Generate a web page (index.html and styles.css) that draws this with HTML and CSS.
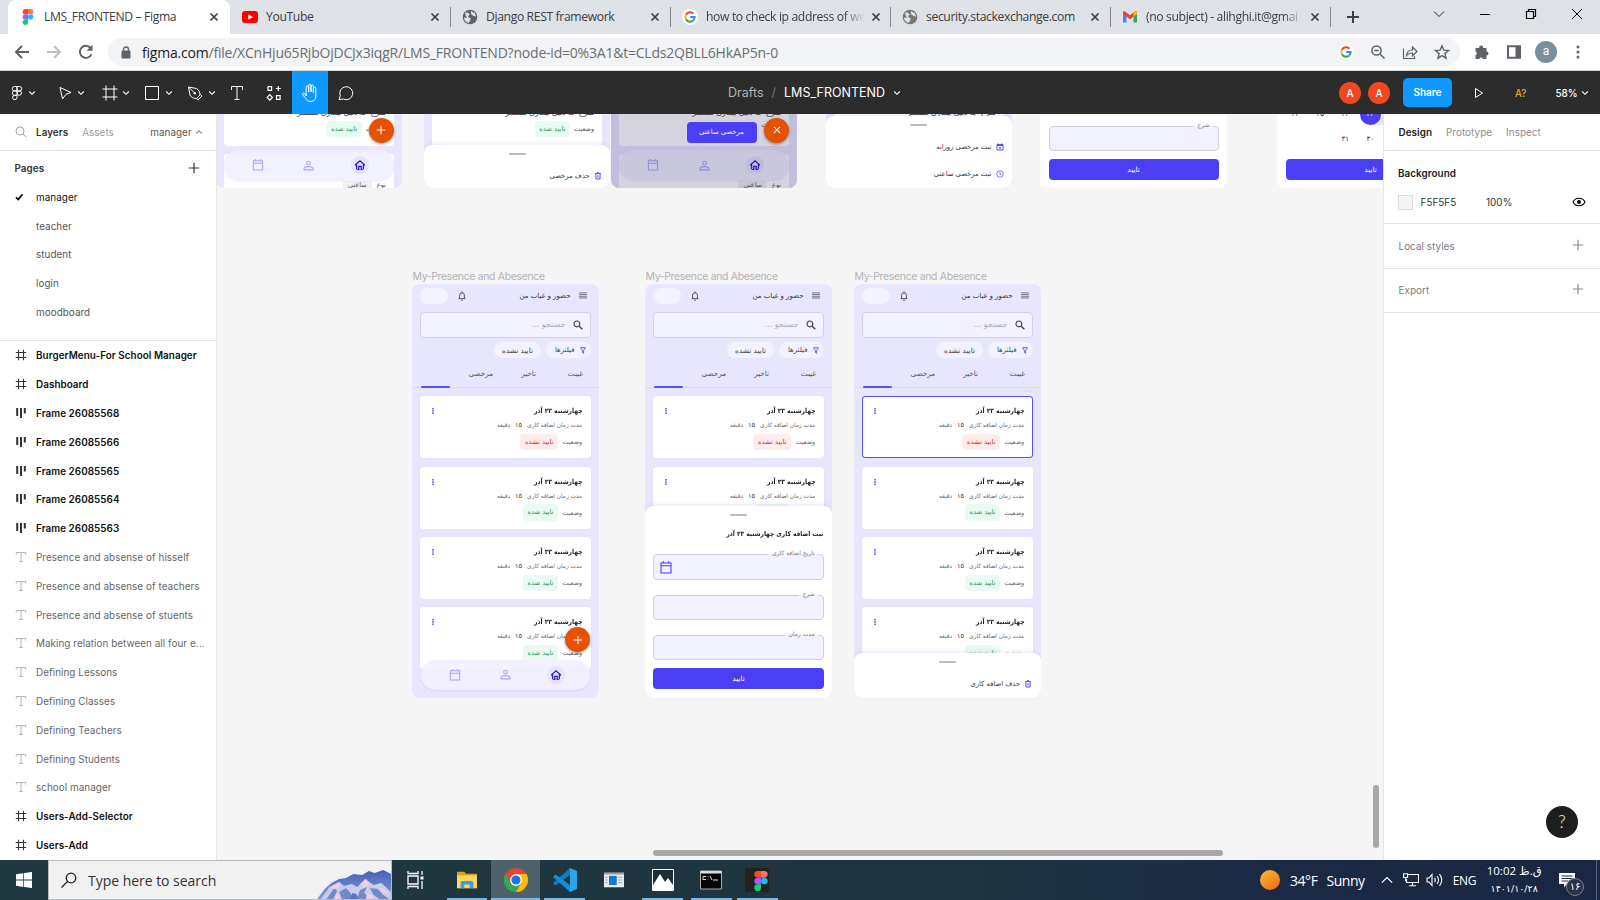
FILE: index.html
```html
<!DOCTYPE html>
<html lang="en">
<head>
<meta charset="utf-8">
<title>LMS_FRONTEND – Figma</title>
<link rel="stylesheet" href="styles.css">
</head>
<body>
<svg class="defs" aria-hidden="true">
  <symbol id="x" viewBox="0 0 10 10"><path d="M1.5 1.5l7 7m0-7l-7 7" fill="none" stroke="currentColor" stroke-width="1.7"/></symbol>
  <symbol id="chev" viewBox="0 0 8 6"><path d="M1.2 1.5L4 4.3l2.800-2.800" fill="none" stroke="currentColor" stroke-width="1.1"/></symbol>
  <symbol id="plus" viewBox="0 0 12 12"><path d="M6 .8v10.400M.8 6h10.400" fill="none" stroke="currentColor" stroke-width="1.200"/></symbol>
  <symbol id="globe" viewBox="0 0 16 16"><circle cx="8" cy="8" r="7.300" fill="currentColor"/><path d="M3 3.500c2-.2 4 .3 4.500 1.700.2 1-1.500 1.300-1.500 2.300S8 8.500 8.500 9.500 7.500 12 7 13.800C4 13.500 2 11 2 8.500L5 9 3.500 6zM9 2l4 2.200 1 3.300-2.500-.5-2-1.500L9 4.500z" fill="#dee1e6"/></symbol>
  <symbol id="goog" viewBox="0 0 18 18"><circle cx="9" cy="9" r="9" fill="#fff"/><g fill="none" stroke-width="2.300"><path d="M12.900 5.200A5.200 5.200 0 0 0 4.400 6.600" stroke="#ea4335"/><path d="M4.400 6.600a5.200 5.200 0 0 0 0 4.800" stroke="#fbbc05"/><path d="M4.400 11.400a5.200 5.200 0 0 0 8.200 1.500" stroke="#34a853"/><path d="M12.600 12.900A5 5 0 0 0 14.200 9H9.200" stroke="#4285f4"/></g></symbol>
  <symbol id="figlogo" viewBox="0 0 12 18"><path d="M3 0h3v6H3a3 3 0 0 1 0-6z" fill="#f24e1e"/><path d="M6 0h3a3 3 0 0 1 0 6H6z" fill="#ff7262"/><path d="M3 6h3v6H3a3 3 0 0 1 0-6z" fill="#a259ff"/><circle cx="9" cy="9" r="3" fill="#1abcfe"/><path d="M3 12h3v3a3 3 0 1 1-3-3z" fill="#0acf83"/></symbol>
  <symbol id="frame" viewBox="0 0 12 12"><path d="M3.500.8v10.400M8.500.8v10.400M.8 3.500h10.400M.8 8.500h10.400" fill="none" stroke="currentColor" stroke-width="1.100"/></symbol>
  <symbol id="auto" viewBox="0 0 12 12"><path d="M2.200 1v8M6 1v10M9.800 1v5.500" fill="none" stroke="currentColor" stroke-width="2"/></symbol>
  <symbol id="txt" viewBox="0 0 12 12"><path d="M1.300 3.500V1.500h9.400v2M6 1.500v9M4.200 10.500h3.600" fill="none" stroke="currentColor" stroke-width=".9"/></symbol>
  <symbol id="burger" viewBox="0 0 8 7"><path d="M0 .9h8M0 2.600h8M0 4.300h8M0 6h8" stroke="#6c6b78" stroke-width=".9"/></symbol>
  <symbol id="bell" viewBox="0 0 8 10"><path d="M.6 7.700h6.800M1.600 7.600V4.200a2.400 2.400 0 0 1 4.800 0v3.400M4 1.800V.6M3.200 9.200h1.600" fill="none" stroke="#444" stroke-width=".9"/></symbol>
  <symbol id="mag" viewBox="0 0 10 10"><circle cx="3.900" cy="3.900" r="2.900" fill="none" stroke="currentColor" stroke-width="1.200"/><path d="M6 6l3.300 3.300" stroke="currentColor" stroke-width="1.400"/></symbol>
  <symbol id="magthin" viewBox="0 0 12 12"><circle cx="5" cy="5" r="4" fill="none" stroke="currentColor" stroke-width=".9"/><path d="M8 8l3.300 3.300" stroke="currentColor" stroke-width=".9"/></symbol>
  <symbol id="funnel" viewBox="0 0 6 7"><path d="M.6.7h4.800L3.600 3.500v2.800l-1.200-.8v-2z" fill="none" stroke="#4b3ff5" stroke-width=".8"/></symbol>
  <symbol id="cal" viewBox="0 0 12 13"><path d="M1 2h10v10H1zM1 4.700h10M3.200 0v2M8.800 0v2" fill="none" stroke="currentColor" stroke-width="1.100"/></symbol>
  <symbol id="person" viewBox="0 0 10 10"><circle cx="5" cy="2.800" r="1.700" fill="none" stroke="currentColor"/><path d="M1 9V7.800C1 6.600 3.500 6 5 6s4 .6 4 1.800V9z" fill="none" stroke="currentColor"/></symbol>
  <symbol id="home" viewBox="0 0 10 10"><path d="M.4 5.300L5 1.200l4.600 4.100M1.900 4.500V9.300h2V6.200h2.200v3.100h2V4.500" fill="none" stroke="currentColor" stroke-width="1.200"/></symbol>
  <symbol id="trash" viewBox="0 0 6 8"><path d="M.2 1.500h5.600M2 .7h2M.9 1.500V7h4.200V1.500" fill="none" stroke="#4b3ff5" stroke-width=".9"/><path d="M2 3.200l2 2.400m0-2.400L2 5.600" stroke="#4b3ff5" stroke-width=".6"/></symbol>
  <symbol id="clock" viewBox="0 0 8 8"><circle cx="4" cy="4" r="3.300" fill="none" stroke="#4b3ff5" stroke-width=".7"/><path d="M4 2v2.200l1.300.8" fill="none" stroke="#4b3ff5" stroke-width=".7"/></symbol>
  <symbol id="calx" viewBox="0 0 8 8"><path d="M1 1.500h6V7H1zM1 2.500h6M2.300.3v1.500M5.700.3v1.500" fill="none" stroke="#4b3ff5" stroke-width=".9"/><path d="M2.900 3.900l2.200 2M5.100 3.900l-2.200 2" stroke="#4b3ff5" stroke-width=".7"/></symbol>
  <symbol id="dots" viewBox="0 0 2 6"><path d="M.2 0h1.600v1.500H.2zM.2 2.200h1.600v1.500H.2zM.2 4.400h1.600v1.500H.2z" fill="#5b50f2"/></symbol>
</svg>

<header class="tabs">
  <div class="tab active"><svg class="fav"><use href="#figlogo"/></svg><span class="tt">LMS_FRONTEND – Figma</span><svg class="cl"><use href="#x"/></svg></div>
  <div class="tab"><svg class="fav" viewBox="0 0 16 16"><rect y="2" width="16" height="12" rx="3" fill="#f00"/><path d="M6.300 5.300v5.400L11 8z" fill="#fff"/></svg><span class="tt">YouTube</span><svg class="cl"><use href="#x"/></svg></div>
  <div class="tab sep"><svg class="fav"><use href="#globe"/></svg><span class="tt">Django REST framework</span><svg class="cl"><use href="#x"/></svg></div>
  <div class="tab sep"><svg class="fav"><use href="#goog"/></svg><span class="tt fade">how to check ip address of we</span><svg class="cl"><use href="#x"/></svg></div>
  <div class="tab sep"><svg class="fav dim"><use href="#globe"/></svg><span class="tt">security.stackexchange.com</span><svg class="cl"><use href="#x"/></svg></div>
  <div class="tab sep"><svg class="fav" viewBox="0 0 16 16"><path d="M1 13.500V3.500L4.500 6v7.500z" fill="#4285f4"/><path d="M15 13.500V3.500L11.500 6v7.500z" fill="#34a853"/><path d="M1 3.500C1 2 2.800 2 3.800 3L8 6.200 12.200 3c1-1 2.800-1 2.800.5V5L8 10.300 1 5z" fill="#ea4335"/><path d="M11.500 3.500l1-.8c1-.6 2.500-.4 2.500 1V5l-3.500 2.700z" fill="#fbbc04"/></svg><span class="tt fade">(no subject) - alihghi.it@gmai</span><svg class="cl"><use href="#x"/></svg></div>
  <div class="newtab"><svg width="14" height="14" viewBox="0 0 14 14"><path d="M7 1v12M1 7h12" stroke="#3c4043" stroke-width="2"/></svg></div>
  <div class="wins">
    <svg viewBox="0 0 12 12"><path d="M1 3.500l5 5 5-5" fill="none" stroke="#222"/></svg>
    <svg viewBox="0 0 12 12"><path d="M1 6.500h10" stroke="#000"/></svg>
    <svg viewBox="0 0 12 12"><path d="M1.500 3.500h7v7h-7zM3.500 3.500v-2h7v7h-2" fill="none" stroke="#000" stroke-width="1.200"/></svg>
    <svg viewBox="0 0 12 12"><path d="M1 1l10 10M11 1L1 11" stroke="#000"/></svg>
  </div>
</header>

<nav class="omni">
  <svg class="nv" viewBox="0 0 16 16"><path d="M15 8H2.500M8 2L2 8l6 6" fill="none" stroke="#5f6368" stroke-width="2"/></svg>
  <svg class="nv" viewBox="0 0 16 16"><path d="M1 8h12.500M8 2l6 6-6 6" fill="none" stroke="#bcbec1" stroke-width="2"/></svg>
  <svg class="nv" viewBox="0 0 16 16"><path d="M13.400 10.300A6 6 0 1 1 12.500 4" fill="none" stroke="#5f6368" stroke-width="2"/><path d="M14.500.8v6H8.500z" fill="#5f6368"/></svg>
  <div class="url">
    <svg class="lock" viewBox="0 0 10 13"><rect x=".5" y="4.500" width="9" height="8" rx="1" fill="#5f6368"/><path d="M2.500 5V3.500a2.500 2.500 0 0 1 5 0V5" fill="none" stroke="#5f6368" stroke-width="1.400"/></svg>
    <span class="addr"><b>figma.com</b>/file/XCnHju65RjbOjDCJx3iqgR/LMS_FRONTEND?node-id=0%3A1&amp;t=CLds2QBLL6HkAP5n-0</span>
    <svg class="u" viewBox="0 0 16 16"><use href="#goog"/></svg>
    <svg class="u" viewBox="0 0 16 16"><circle cx="6.500" cy="6.500" r="4.600" fill="none" stroke="#5f6368" stroke-width="1.500"/><path d="M10 10l4.500 4.500M4.300 6.500h4.400" stroke="#5f6368" stroke-width="1.500"/></svg>
    <svg class="u" viewBox="0 0 16 16"><path d="M1.500 4.500v10h11V12M4.500 11.500c.3-3.500 2.500-5.500 6-5.500V3l4.500 4.500-4.500 4.300V9C8 9 6 9.500 4.500 11.500z" fill="none" stroke="#5f6368" stroke-width="1.200"/></svg>
    <svg class="u" viewBox="0 0 16 16"><path d="M8 1.800l1.800 4.300 4.700.4-3.600 3.100 1.100 4.600L8 11.700l-4 2.500 1.100-4.600L1.500 6.500l4.700-.4z" fill="none" stroke="#5f6368" stroke-width="1.400"/></svg>
  </div>
  <svg class="ext" viewBox="0 0 16 16"><path d="M1.500 4h3.700a2 2 0 1 1 3.800 0h3.500v3.500a2 2 0 1 1 0 4V15H9a1.900 1.900 0 0 0-3.700 0H1.500v-3.800a1.900 1.900 0 0 0 0-3.700z" fill="#5f6368"/></svg>
  <svg class="ext" viewBox="0 0 16 16"><path d="M2 2.300h12v11.400H2z" fill="none" stroke="#5f6368" stroke-width="2"/><path d="M9.500 2h5v12h-5z" fill="#5f6368"/></svg>
  <span class="me">a</span>
  <svg class="ext more" viewBox="0 0 16 16"><g fill="#5f6368"><circle cx="8" cy="3" r="1.500"/><circle cx="8" cy="8" r="1.500"/><circle cx="8" cy="13" r="1.500"/></g></svg>
</nav>

<div class="fig">
  <div class="tools">
    <svg class="w14 ic" viewBox="0 0 14 16"><g fill="none" stroke="#fff"><path d="M7 1.500H4.500a2.200 2.200 0 0 0 0 4.400H7zM7 1.500h2.500a2.200 2.200 0 0 1 0 4.400H7zM7 5.900H4.500a2.200 2.200 0 0 0 0 4.400H7z"/><circle cx="9.300" cy="8.100" r="2.200"/><path d="M7 10.300H4.500A2.200 2.200 0 1 0 7 12.500z"/></g></svg><svg class="cv"><use href="#chev"/></svg>
    <svg class="ic t2" viewBox="0 0 16 16"><path d="M3 2.500l11 5-5 1.800-3.500 4.500z" fill="none" stroke="#fff" stroke-linejoin="round"/></svg><svg class="cv"><use href="#chev"/></svg>
    <svg class="ic t3" viewBox="0 0 16 16"><path d="M4 .5v15M12 .5v15M.5 4h15M.5 12h15" stroke="#fff"/></svg><svg class="cv"><use href="#chev"/></svg>
    <svg class="ic t4" viewBox="0 0 16 16"><path d="M1.500 1.500h13v13h-13z" fill="none" stroke="#fff"/></svg><svg class="cv"><use href="#chev"/></svg>
    <svg class="ic t5" viewBox="0 0 16 16"><path d="M1.500 2l8 1.500c2.500 1.500 3.500 4 3.500 6.500l-3.500 3.500C7 13.500 4 12.500 3 10zM1.500 2L7 7.500M13.300 9.300l1.700 1.700-4 4-1.700-1.700" fill="none" stroke="#fff"/><circle cx="7.800" cy="8.300" r="1.300" fill="#fff"/></svg><svg class="cv"><use href="#chev"/></svg>
    <svg class="ic t6" viewBox="0 0 16 16"><path d="M2.500 5V1.500h11V5M8 1.500v13M5.500 14.500h5" fill="none" stroke="#fff"/></svg>
    <svg class="ic t7" viewBox="0 0 16 16"><path d="M2 1.700h3.600v3.600H2zM10.500 10.700h3.600v3.600h-3.600zM12.300 1v5M9.800 3.500h5M3.800 9.700l2.600 2.700-2.600 2.700-2.600-2.700z" fill="none" stroke="#fff" stroke-width="1.200"/></svg>
    <span class="hand"><svg viewBox="0 0 18 20"><path d="M5.200 11V4.200a1.200 1.200 0 0 1 2.400 0V9 2.500a1.200 1.200 0 0 1 2.400 0V9 3.200a1.200 1.200 0 0 1 2.400 0V9.500 5.200a1.200 1.200 0 0 1 2.400 0V13c0 3.500-2 5.500-5 5.500-2.500 0-4-1-5.200-3.200L1.600 11.500c-.5-1.200 1.200-2 2-.9L5.200 13z" fill="none" stroke="#fff" stroke-linejoin="round"/></svg></span>
    <svg class="ic t8" viewBox="0 0 16 16"><path d="M1 14.700l1.300-3.900A6.500 6.500 0 1 1 5.300 14z" fill="none" stroke="#fff" stroke-linejoin="round"/></svg>
  </div>
  <div class="ftitle"><span class="dr">Drafts</span><span class="sl">/</span><span>LMS_FRONTEND</span><svg class="cv"><use href="#chev"/></svg></div>
  <div class="fright"><i class="av">A</i><i class="av">A</i><span class="share">Share</span><svg class="play" viewBox="0 0 10 12"><path d="M1.500 1.500l7 4.500-7 4.500z" fill="none" stroke="#fff"/></svg><span class="aq">A?</span><span class="zm">58%</span><svg class="cv"><use href="#chev"/></svg></div>
</div>

<main class="work">
  <aside class="left">
    <div class="lhead"><svg class="lm"><use href="#magthin"/></svg><b>Layers</b><span class="as">Assets</span><span class="pg">manager</span><svg class="up"><use href="#chev"/></svg></div>
    <div class="pages">
      <div class="ph"><b>Pages</b><svg><use href="#plus"/></svg></div>
      <div class="li on"><svg viewBox="0 0 12 12"><path d="M1 6.300l2.300 2.200L7.500 3.200" fill="none" stroke="#000" stroke-width="1.700"/></svg>manager</div>
      <div class="li pgi">teacher</div><div class="li pgi">student</div><div class="li pgi">login</div><div class="li pgi">moodboard</div>
    </div>
    <div class="layers">
      <div class="li f"><svg><use href="#frame"/></svg>BurgerMenu-For School Manager</div>
      <div class="li f"><svg><use href="#frame"/></svg>Dashboard</div>
      <div class="li f"><svg><use href="#auto"/></svg>Frame 26085568</div>
      <div class="li f"><svg><use href="#auto"/></svg>Frame 26085566</div>
      <div class="li f"><svg><use href="#auto"/></svg>Frame 26085565</div>
      <div class="li f"><svg><use href="#auto"/></svg>Frame 26085564</div>
      <div class="li f"><svg><use href="#auto"/></svg>Frame 26085563</div>
      <div class="li t"><svg><use href="#txt"/></svg>Presence and absense of hisself</div>
      <div class="li t"><svg><use href="#txt"/></svg>Presence and absense of teachers</div>
      <div class="li t"><svg><use href="#txt"/></svg>Presence and absense of stuents</div>
      <div class="li t"><svg><use href="#txt"/></svg>Making relation between all four e...</div>
      <div class="li t"><svg><use href="#txt"/></svg>Defining Lessons</div>
      <div class="li t"><svg><use href="#txt"/></svg>Defining Classes</div>
      <div class="li t"><svg><use href="#txt"/></svg>Defining Teachers</div>
      <div class="li t"><svg><use href="#txt"/></svg>Defining Students</div>
      <div class="li t"><svg><use href="#txt"/></svg>school manager</div>
      <div class="li f"><svg><use href="#frame"/></svg>Users-Add-Selector</div>
      <div class="li f"><svg><use href="#frame"/></svg>Users-Add</div>
    </div>
  </aside>

  <section class="canvas" lang="fa">
    <!-- upper row of frames -->
    <div class="ph-frame top p1" dir="rtl">
      <div class="tcard"><p class="desc">شرح &nbsp;به دلیل بیماری مستمر</p><div class="row3"><span>وضعیت</span><em class="ok">تایید شده</em></div></div>
      <div class="tcard low"><span>نوع</span><em>ساعتی</em></div>
      <div class="bar"><svg class="cur"><use href="#home"/></svg><svg><use href="#person"/></svg><svg><use href="#cal"/></svg></div>
      <div class="fab"><svg><use href="#plus"/></svg></div>
    </div>
    <div class="ph-frame top p2" dir="rtl">
      <div class="tcard"><p class="desc">شرح &nbsp;به دلیل بیماری مستمر</p><div class="row3"><span>وضعیت</span><em class="ok">تایید شده</em></div></div>
      <div class="sheet s2"><i></i><p class="act"><svg class="tr"><use href="#trash"/></svg><span>حذف مرخصی</span></p></div>
    </div>
    <div class="ph-frame top p3" dir="rtl">
      <div class="tcard"><p class="desc">شرح &nbsp;به دلیل بیماری مستمر</p><div class="row3"><span>وضعیت</span></div></div>
      <div class="tcard low"><span>نوع</span><em>ساعتی</em></div>
      <div class="bar"><svg class="cur"><use href="#home"/></svg><svg><use href="#person"/></svg><svg><use href="#cal"/></svg></div>
      <div class="shade"></div>
      <div class="pop">مرخصی ساعتی</div>
      <div class="fab"><svg class="rot"><use href="#plus"/></svg></div>
    </div>
    <div class="ph-frame top p4" dir="rtl">
      <div class="tcard"><p class="desc">شرح &nbsp;به دلیل بیماری مستمر</p></div>
      <div class="sheet s4"><i></i><p class="act"><svg><use href="#calx"/></svg><span>ثبت مرخصی روزانه</span></p><p class="act"><svg><use href="#clock"/></svg><span>ثبت مرخصی ساعتی</span></p></div>
    </div>
    <div class="ph-frame top p5" dir="rtl"><div class="field"><label>شرح</label></div><div class="btn">تایید</div></div>
    <div class="ph-frame top p6" dir="rtl">
      <div class="strip"></div><div class="day"></div>
      <div class="days r1"><span class="w">۲۳</span><span>۲۴</span><span>۲۵</span><span>۲۶</span></div>
      <div class="days"><span>۳۰</span><span>۳۱</span></div>
      <div class="btn">تایید</div>
    </div>

    <!-- presence and absence screens -->
    <h4 class="cap c1">My-Presence and Abesence</h4>
    <h4 class="cap c2">My-Presence and Abesence</h4>
    <h4 class="cap c3">My-Presence and Abesence</h4>

    <div class="ph-frame big b1" dir="rtl">
      <div class="hd"><svg class="bg"><use href="#burger"/></svg><span>حضور و غیاب من</span><svg class="be"><use href="#bell"/></svg><i></i></div>
      <div class="srch"><svg><use href="#mag"/></svg><span>جستجو ...</span></div>
      <div class="chips"><span><svg><use href="#funnel"/></svg>فیلترها</span><span>تایید نشده</span></div>
      <div class="tb"><span>غیبت</span><span>تاخیر</span><span>مرخصی</span><i></i></div>
      <div class="card"><h5>چهارشنبه ۲۳ آذر</h5><svg><use href="#dots"/></svg><p>مدت زمان اضافه کاری<b>۱۵</b>دقیقه</p><div class="row3"><span>وضعیت</span><em class="no">تایید نشده</em></div></div>
      <div class="card"><h5>چهارشنبه ۲۳ آذر</h5><svg><use href="#dots"/></svg><p>مدت زمان اضافه کاری<b>۱۵</b>دقیقه</p><div class="row3"><span>وضعیت</span><em class="ok">تایید شده</em></div></div>
      <div class="card"><h5>چهارشنبه ۲۳ آذر</h5><svg><use href="#dots"/></svg><p>مدت زمان اضافه کاری<b>۱۵</b>دقیقه</p><div class="row3"><span>وضعیت</span><em class="ok">تایید شده</em></div></div>
      <div class="card"><h5>چهارشنبه ۲۳ آذر</h5><svg><use href="#dots"/></svg><p>مدت زمان اضافه کاری<b>۱۵</b>دقیقه</p><div class="row3"><span>وضعیت</span><em class="ok">تایید شده</em></div></div>
      <div class="bar"><svg class="cur"><use href="#home"/></svg><svg><use href="#person"/></svg><svg><use href="#cal"/></svg></div>
      <div class="fab"><svg><use href="#plus"/></svg></div>
    </div>

    <div class="ph-frame big b2" dir="rtl">
      <div class="hd"><svg class="bg"><use href="#burger"/></svg><span>حضور و غیاب من</span><svg class="be"><use href="#bell"/></svg><i></i></div>
      <div class="srch"><svg><use href="#mag"/></svg><span>جستجو ...</span></div>
      <div class="chips"><span><svg><use href="#funnel"/></svg>فیلترها</span><span>تایید نشده</span></div>
      <div class="tb"><span>غیبت</span><span>تاخیر</span><span>مرخصی</span><i></i></div>
      <div class="card"><h5>چهارشنبه ۲۳ آذر</h5><svg><use href="#dots"/></svg><p>مدت زمان اضافه کاری<b>۱۵</b>دقیقه</p><div class="row3"><span>وضعیت</span><em class="no">تایید نشده</em></div></div>
      <div class="card"><h5>چهارشنبه ۲۳ آذر</h5><svg><use href="#dots"/></svg><p>مدت زمان اضافه کاری<b>۱۵</b>دقیقه</p><div class="row3"><em class="ok"></em></div></div>
      <div class="sheet sf"><i></i><h5>ثبت اضافه کاری چهارشنبه ۲۳ آذر</h5>
        <div class="field"><label>تاریخ اضافه کاری</label><svg><use href="#cal"/></svg></div>
        <div class="field"><label>شرح</label></div>
        <div class="field"><label>مدت زمان</label></div>
        <div class="btn">تایید</div></div>
    </div>

    <div class="ph-frame big b3" dir="rtl">
      <div class="hd"><svg class="bg"><use href="#burger"/></svg><span>حضور و غیاب من</span><svg class="be"><use href="#bell"/></svg><i></i></div>
      <div class="srch"><svg><use href="#mag"/></svg><span>جستجو ...</span></div>
      <div class="chips"><span><svg><use href="#funnel"/></svg>فیلترها</span><span>تایید نشده</span></div>
      <div class="tb"><span>غیبت</span><span>تاخیر</span><span>مرخصی</span><i></i></div>
      <div class="card sel"><h5>چهارشنبه ۲۳ آذر</h5><svg><use href="#dots"/></svg><p>مدت زمان اضافه کاری<b>۱۵</b>دقیقه</p><div class="row3"><span>وضعیت</span><em class="no">تایید نشده</em></div></div>
      <div class="card"><h5>چهارشنبه ۲۳ آذر</h5><svg><use href="#dots"/></svg><p>مدت زمان اضافه کاری<b>۱۵</b>دقیقه</p><div class="row3"><span>وضعیت</span><em class="ok">تایید شده</em></div></div>
      <div class="card"><h5>چهارشنبه ۲۳ آذر</h5><svg><use href="#dots"/></svg><p>مدت زمان اضافه کاری<b>۱۵</b>دقیقه</p><div class="row3"><span>وضعیت</span><em class="ok">تایید شده</em></div></div>
      <div class="card"><h5>چهارشنبه ۲۳ آذر</h5><svg><use href="#dots"/></svg><p>مدت زمان اضافه کاری<b>۱۵</b>دقیقه</p><div class="row3"><span>وضعیت</span><em class="ok">تایید شده</em></div></div>
      <div class="sheet s3"><i></i><p class="act"><svg class="tr"><use href="#trash"/></svg><span>حذف اضافه کاری</span></p></div>
    </div>
    <div class="sbh"></div><div class="sbv"></div>
  </section>

  <aside class="right">
    <div class="rh"><b>Design</b><span>Prototype</span><span>Inspect</span></div>
    <div class="rb"><b>Background</b><div class="rc"><i></i><span class="hex">F5F5F5</span><span>100%</span><svg viewBox="0 0 14 10"><path d="M1 5c2.500-5 9.500-5 12 0-2.500 5-9.500 5-12 0z" fill="none" stroke="#000" stroke-width="1.100"/><circle cx="7" cy="5" r="2" fill="#000"/></svg></div></div>
    <div class="rs">Local styles<svg><use href="#plus"/></svg></div>
    <div class="rs">Export<svg><use href="#plus"/></svg></div>
    <div class="help">?</div>
  </aside>
</main>

<footer class="task">
  <div class="start"><svg viewBox="0 0 16 16"><path d="M0 2.200L7.300 1.200v6.400H0zM8 1.100L16 0v7.600H8zM0 8.400h7.300v6.500L0 13.800zM8 8.400h8V16l-8-1.100z" fill="#fff"/></svg></div>
  <div class="find"><svg class="fm" viewBox="0 0 16 16"><circle cx="10" cy="6" r="4.800" fill="none" stroke="#222" stroke-width="1.300"/><path d="M6.500 9.500l-6 6" stroke="#222" stroke-width="1.300"/></svg><span>Type here to search</span>
    <svg class="mt" viewBox="0 0 77 29" preserveAspectRatio="none"><defs><linearGradient id="mg" x1="0" y1="0" x2="0" y2="1"><stop offset="0" stop-color="#4460b8"/><stop offset="1" stop-color="#7f9edb"/></linearGradient></defs><path d="M0 29L8 19l7-6 8-4 7-1 8-4 9 1 7-4 6 2 9-3 8 4v25z" fill="url(#mg)"/><path d="M4 29l9-12 10-5 5 4 8-2 6 3 8-8 9 6 8-2 10 9v7z" fill="#c9cdea"/><path d="M10 29l8-11 3 3-4 8zM26 29l-3-7 7-4 5 5 3 6zM41 29l4-9 7-3-3 6 8 6zM59 25l-4-7 8 1 6 6 6 4H65z" fill="#6d8bcb"/><path d="M14 17l9-5 1 5-6 2zM45 14l6-5 4 5-6 4zM64 17l6 2 5 6-7-3zM20 24l4 1-1 4h-5zM52 23l7 3-2 3h-6z" fill="#f0cfdf"/><path d="M34 29l3-6 4 1 2 5z" fill="#5a74b8"/></svg></div>
  <div class="apps">
    <div class="app n"><svg viewBox="0 0 20 20"><g fill="none" stroke="#fff" stroke-width="1.300"><path d="M3 6h10v8H3zM3 1v2.500h10V1M3 19v-2.500h10V19M17 1v4M17 11v8"/></g><path d="M15.500 6.500h3v3h-3z" fill="#fff"/></svg></div>
    <div class="app"><svg viewBox="0 0 22 20"><path d="M0 1h8l2 2h12v16H0z" fill="#dd9f16"/><path d="M0 5h22v14H0z" fill="#ffd55f"/><path d="M4 19v-6q0-2 2-2h10q2 0 2 2v6h-4v-4H8v4z" fill="#3a9be6"/></svg></div>
    <div class="app cur2"><svg class="w24" viewBox="0 0 24 24"><circle cx="12" cy="12" r="12" fill="#ea4335"/><path d="M1.600 6A12 12 0 0 0 12 24l5.200-9L6.800 15z" fill="#34a853"/><path d="M12 24A12 12 0 0 0 22.400 6H12l5.200 9z" fill="#fbbc05"/><circle cx="12" cy="12" r="6" fill="#fff"/><circle cx="12" cy="12" r="4.600" fill="#1a73e8"/></svg></div>
    <div class="app"><svg class="w24" viewBox="0 0 24 24"><path d="M17 0l-17 15 2.500 2.500L17 7z" fill="#0d7cc4"/><path d="M17 24L0 9l2.500-2.500L17 17z" fill="#178fd8"/><path d="M17 0l7 3v18l-7 3z" fill="#2ba5ee"/></svg></div>
    <div class="app n"><svg viewBox="0 0 22 18"><path d="M0 1h22v16H0z" fill="#e9ecef"/><path d="M0 1h22v2H0z" fill="#9aa3ab"/><path d="M5.500 4.500h8.500v10H5.500z" fill="#1379d4"/><path d="M15.500 6h5M15.500 9h5M15.500 12h5M1.200 6h3M1.200 9h3M1.200 12h3" stroke="#9aa3ab"/></svg></div>
    <div class="app"><svg class="w22" viewBox="0 0 22 22"><path d="M.5.500h21v21H.500z" fill="#1d2d33" stroke="#fff"/><path d="M1 16l7-11 5 8 3-4 5 7v5H1z" fill="#fff"/></svg></div>
    <div class="app"><svg class="w22" viewBox="0 0 22 20"><path d="M.5 1h21v18H.500z" fill="#050505" stroke="#aaa"/><path d="M.5 1h21v2.500H.500z" fill="#ddd"/><path d="M6 6.500H3v3h3M8 6.500v.5M8 9v.5M10 6l2 4M13 10h5" stroke="#ddd" fill="none"/></svg></div>
    <div class="app last"><svg class="w24" viewBox="0 0 24 24"><rect width="24" height="24" rx="2" fill="#222"/><svg x="6" y="3" width="12" height="18"><use href="#figlogo"/></svg></svg></div>
  </div>
  <div class="tray">
    <i class="sun"></i><span class="tmp">34°F</span><span class="tmp">Sunny</span>
    <svg class="t-up" viewBox="0 0 12 8"><path d="M.8 6.700L6 1.500l5.200 5.200" fill="none" stroke="#fff" stroke-width="1.200"/></svg>
    <svg class="t-mon" viewBox="0 0 16 14"><path d="M5 1.500h10.500v8H3.500V6M9.500 9.500v3M6 12.700h7M.6.700h4v3.800h-4zM2.600 4.500V8" fill="none" stroke="#fff" stroke-width="1.100"/></svg>
    <svg class="t-spk" viewBox="0 0 17 14"><path d="M1 5h2l3-3.500v11L3 9H1zM8.500 4.800q1.500 2.200 0 4.400M11 3q3 4 0 8M13.500 1.200q4.500 5.800 0 11.600" fill="none" stroke="#fff" stroke-width="1.100"/></svg>
    <span class="eng">ENG</span>
    <div class="clk"><span>10:02 ق.ظ</span><span>۱۴۰۱/۱۰/۲۸</span></div>
    <div class="note"><svg viewBox="0 0 16 16"><path d="M0 1h16v11H8l-3 3.500V12H0z" fill="#fff"/><path d="M2.500 4h11M2.500 6.500h11M2.500 9h7" stroke="#1a2a42"/></svg><b>۱۶</b></div>
  </div>
</footer>
</body>
</html>
```
FILE: styles.css
```css
* { box-sizing: border-box; }
html, body { margin: 0; padding: 0; }
body { width: 1600px; height: 900px; overflow: hidden; display: flex; flex-direction: column; background: #fff; font-family: Inter, sans-serif; }
p, h4, h5 { margin: 0; }
i, em { font-style: normal; }
svg { flex: none; display: block; }
.defs { position: absolute; width: 0; height: 0; }

/* browser tabs */
.tabs { height: 34px; flex: none; display: flex; background: #dee1e6; font: 12.200px "Segoe UI", "Open Sans", sans-serif; color: #3c4043; padding-left: 10px; letter-spacing: -.38px; }
.tab { width: 220px; height: 34px; display: flex; align-items: center; padding: 0 10px 0 12px; position: relative; }
.tab.active { background: #fff; border-radius: 8px 8px 0 0; margin-left: -2px; padding-left: 12px; width: 222px; }
.tab.sep::before { content: ""; position: absolute; left: 0; top: 7px; width: 1px; height: 20px; background: #85888c; }
.fav { width: 16px; height: 16px; margin-right: 8px; color: #5f6368; }
.fav.dim { color: #777; }
.tt { width: 160px; white-space: nowrap; padding-bottom: 1px; }
.fade { -webkit-mask-image: linear-gradient(90deg, #000 86%, transparent 99%); mask-image: linear-gradient(90deg, #000 86%, transparent 99%); }
.cl { width: 10px; height: 10px; margin-left: 5px; color: #3c4043; }
.newtab { border-left: 1px solid #85888c; height: 20px; margin: 7px 0; padding: 3px 0 0 15px; width: 86px; }
.wins { display: flex; gap: 34px; padding: 8px 0 0 17px; }
.wins svg { width: 12px; height: 12px; }

/* address row */
.omni { height: 37px; flex: none; display: flex; align-items: center; padding: 0 14px; border-bottom: 1px solid #d5d8db; }
.nv { width: 16px; height: 16px; margin-right: 16px; }
.url { width: 1352px; height: 28px; margin-left: -2px; border-radius: 14px; background: #f1f3f4; display: flex; align-items: center; padding: 0 10px 0 13px; gap: 16px; }
.lock { width: 10px; height: 13px; margin-right: -5px; }
.addr { flex: 1; font: 14px "Segoe UI", "Open Sans", sans-serif; letter-spacing: -.21px; color: #6a6e73; white-space: nowrap; }
.addr b { font-weight: 400; color: #202124; }
.u { width: 16px; height: 16px; }
.ext { width: 16px; height: 16px; margin-left: 16px; }
.url + .ext { margin-left: 14px; }
.me { width: 22px; height: 22px; border-radius: 50%; background: #78909c; color: #fff; font: 12px/21px Roboto, sans-serif; text-align: center; margin-left: 13px; }
.more { margin-left: 13px; }

/* editor toolbar */
.fig { height: 43px; flex: none; background: #2c2c2c; color: #fff; display: flex; align-items: center; font-size: 12px; }
.tools { display: flex; align-items: center; height: 43px; width: 728px; padding-left: 10px; }
.ic { width: 16px; height: 16px; }
.w14 { width: 14px; }
.cv { width: 8px; height: 6px; margin-left: 4px; }
.t2 { margin-left: 21px; }
.t3 { margin-left: 17px; }
.t4 { margin-left: 14px; }
.t5 { margin-left: 14px; }
.t4 + .cv, .t5 + .cv { margin-left: 5px; }
.t6 { margin-left: 13px; }
.t7 { margin-left: 21px; }
.hand { margin-left: 10px; width: 36px; height: 43px; background: #0d99ff; display: flex; align-items: center; justify-content: center; }
.hand svg { width: 18px; height: 20px; }
.t8 { margin-left: 9.500px; }
.ftitle { display: flex; align-items: center; width: 620px; font-size: 12.500px; }
.dr { color: #b3b3b3; }
.sl { color: #777; margin: 0 8px; }
.ftitle .cv { margin-left: 8px; }
.fright { display: flex; align-items: center; flex: 1; margin-left: -9px; }
.av { width: 22px; height: 22px; border-radius: 50%; background: #f24822; font-size: 10px; line-height: 22px; text-align: center; font-weight: 500; margin-right: 7px; }
.share { width: 49px; height: 29px; line-height: 29px; border-radius: 5px; background: #0d99ff; text-align: center; font-size: 10px; font-weight: 600; margin-left: 6px; }
.play { width: 10px; height: 12px; margin-left: 22px; }
.aq { color: #f2c21a; font-size: 10px; margin-left: 31px; width: 40.500px; }
.zm { font-size: 9.900px; width: 21px; font-weight: 500; }

/* work area */
.work { height: 746px; flex: none; display: flex; font-size: 9.900px; letter-spacing: .05px; color: #333; }
.left { width: 217px; border-right: 1px solid #e5e5e5; overflow: hidden; }
.lhead { height: 37px; border-bottom: 1px solid #e5e5e5; display: flex; align-items: center; padding-left: 15px; }
.lm { width: 12px; height: 12px; color: #999; margin-right: 9px; }
.lhead b, .ph b, .rh b, .rb b { font-weight: 600; }
.as { color: #9a9a9a; margin-left: 14px; width: 68px; }
.pg { color: #555; }
.up { width: 8px; height: 6px; transform: scaleY(-1); margin-left: 3px; color: #888; }
.pages { height: 190px; border-bottom: 1px solid #e5e5e5; }
.ph { height: 32px; display: flex; align-items: center; justify-content: space-between; padding: 2px 16px 0 14.500px; }
.ph svg { width: 12px; height: 12px; }
.li { height: 28.800px; display: flex; align-items: center; padding-left: 15px; white-space: nowrap; }
.li svg { width: 12px; height: 12px; margin-right: 9px; }
.pgi { padding-left: 36px; color: #555; padding-bottom: 1px; }
.li.on { color: #111; }
.li.f { font-weight: 600; color: #111; }
.li.f svg { color: #333; }
.li.t { color: #666; letter-spacing: .05px; }
.li.t svg { color: #aaa; }

.right { width: 217px; border-left: 1px solid #e5e5e5; position: relative; margin-left: auto; }
.rh { height: 37px; border-bottom: 1px solid #e5e5e5; display: flex; align-items: center; gap: 14px; padding-left: 14.500px; color: #8c8c8c; }
.rh b, .rb b { color: #222; }
.rb { height: 73px; border-bottom: 1px solid #e5e5e5; padding: 15px 14.500px 0 14px; line-height: 14px; }
.rc { display: flex; align-items: center; margin-top: 14px; height: 16px; }
.rc i { width: 15px; height: 15px; background: #f5f5f5; border: 1px solid #dcdcdc; }
.hex { margin-left: 7.500px; width: 65.500px; }
.rc svg { width: 14px; height: 10px; margin-left: auto; }
.rs { height: 44.500px; border-bottom: 1px solid #e5e5e5; display: flex; align-items: center; justify-content: space-between; padding: 0 16px 0 14.500px; color: #7b7b7b; }
.rs svg { width: 12px; height: 12px; color: #8a8a8a; margin-bottom: 2px; }
.help { position: absolute; right: 22px; bottom: 22px; width: 32px; height: 32px; border-radius: 50%; background: #1e1e1e; color: #fff; text-align: center; font: 300 17px/32px Lato, sans-serif; }

/* canvas: frames sit at free positions */
.canvas { width: 1166px; height: 746px; background: #f5f5f5; position: relative; overflow: hidden; letter-spacing: 0; font-family: "DejaVu Sans", sans-serif; font-size: 6px; }
.cap { position: absolute; top: 156px; font: 10.400px/14px Inter, sans-serif; letter-spacing: -.29px; color: #b3b3b3; white-space: nowrap; }
.c1 { left: 195.500px; } .c2 { left: 428.500px; } .c3 { left: 637.500px; }
.ph-frame { position: absolute; width: 186.300px; background: #e8e6fe; border-radius: 8px; overflow: hidden; padding: 0 8.200px; }
.top { top: -60px; height: 134.300px; }
.p1 { left: -1.300px; } .p2 { left: 207px; } .p3 { left: 394px; } .p4 { left: 608.800px; }
.p5 { left: 823.400px; background: #fff; padding-top: 71.500px; } .p6 { left: 1060.400px; background: #fff; padding-top: 55px; }
.big { top: 169.700px; height: 414.300px; padding-left: 8px; }
.b1 { left: 195.400px; } .b2 { left: 428.400px; } .b3 { left: 637.400px; }

.tcard { background: #fff; border-radius: 4px; height: 92px; padding: 54px 8px 0; color: #555; }
.desc { font-size: 7.500px; line-height: 10px; margin-bottom: 1px; color: #333; }
.tcard.low { margin-top: 8px; height: 60px; padding-top: 27px; display: flex; gap: 5px; font-size: 6.500px; }
.tcard.low em { background: #f0f0f0; height: 11px; padding: 0 5px; }

.hd { height: 28px; padding: 4px 4px 8px 0; display: flex; align-items: center; color: #333; font-size: 7px; }
.bg { width: 8px; height: 7px; }
.hd span { width: 105px; margin-right: 8px; }
.be { width: 8px; height: 10px; }
.hd i { width: 28px; height: 16px; border-radius: 8px; background: #f3f2ff; margin-right: auto; flex: none; }
.srch { height: 26px; border: 1px solid #d2d1dd; border-radius: 4px; background: #f2f1ff; display: flex; align-items: center; padding-right: 7px; color: #aaa; font-size: 8px; gap: 7px; }
.srch svg { width: 10px; height: 10px; color: #444; }
.chips { display: flex; gap: 5px; margin-top: 4.300px; }
.chips span { height: 16.500px; border-radius: 8.500px; background: #f2f1ff; display: flex; align-items: center; color: #444; width: 47px; justify-content: center; gap: 5px; font-size: 7.300px; }
.chips span:first-child { width: 44.500px; font-size: 7px; justify-content: flex-start; padding-right: 5px; }
.chips svg { width: 6px; height: 7px; }
.tb { position: relative; display: flex; margin: 0 -8px; height: 29.400px; padding: 10.500px 15.500px 0 0; color: #555; border-bottom: 1px solid #dddbed; font-size: 7.200px; }
.tb span { width: 47px; }
.tb span:nth-child(2) { width: 43px; }
.tb i { position: absolute; left: 8.500px; bottom: -1px; width: 29px; height: 2px; background: #5b50f2; border-radius: 2px; }
.card { position: relative; margin: 8.400px 0 0; height: 62px; background: #fff; border-radius: 3.500px; padding: 9px 8.300px 0; color: #666; box-shadow: 0 0 2px rgba(90, 80, 220, .08); white-space: nowrap; }
.card.sel { box-shadow: inset 0 0 0 1px #5b50f2; }
.card h5 { font-size: 6.900px; line-height: 12px; color: #222; transform: scaleX(.87); transform-origin: right; }
.card > svg { position: absolute; left: 11.500px; top: 12px; width: 2px; height: 6px; }
.card p { line-height: 12px; margin-top: 2px; font-size: 5.800px; }
.card b { margin: 0 5px; color: #333; font-weight: 500; font-size: 6.500px; line-height: 1; }
.row3 { display: flex; align-items: center; gap: 4px; margin-top: 2.600px; font-size: 6.400px; white-space: nowrap; }
.row3 span { width: 20px; }
.row3 em { height: 16.500px; line-height: 16px; border-radius: 4px; padding: 0; text-align: center; width: 35.500px; font-size: 6.700px; }
.ok { background: #e8faf2; color: #1c9a58; }
.no { background: #ffecea; color: #c2352f; }
.row3 em.no { width: 38px; }
.b2 .row3 em:first-child { margin-right: 24px; }
.bar { position: absolute; left: 8.300px; right: 8.300px; bottom: 8px; height: 30px; border-radius: 15px; background: rgba(241, 240, 255, .92); box-shadow: 0 1px 2px rgba(80, 70, 200, .12); display: flex; align-items: center; justify-content: space-between; padding: 0 28px; color: #aaa3fb; }
.bar svg { width: 12px; height: 12px; }
.bar svg:nth-child(2) { width: 11px; height: 11px; }
.bar .cur { width: 18px; height: 18px; padding: 3.500px; margin: 0 -3px; background: #e6e3fd; border-radius: 50%; color: #2a1bd0; }
.fab { position: absolute; right: 8.300px; bottom: 45.500px; width: 25px; height: 25px; border-radius: 50%; background: #e65100; color: #fff; display: flex; align-items: center; justify-content: center; box-shadow: 0 1px 3px rgba(0, 0, 0, .4); }
.fab svg { width: 10px; height: 10px; }
.rot { transform: rotate(45deg); }
.shade { position: absolute; inset: 0; background: rgba(40, 36, 90, .2); }
.pop { position: absolute; left: 75.500px; bottom: 45.300px; width: 70px; height: 21px; line-height: 21px; border-radius: 4px; background: #4b3ff5; color: #fff; text-align: center; font-size: 6.800px; }
.sheet { position: absolute; left: 0; right: 0; bottom: 0; background: #fff; border-radius: 8px; padding: 0 8px; box-shadow: 0 -1px 5px rgba(100, 90, 200, .15); }
.sheet > i { display: block; width: 17px; height: 2.400px; border-radius: 2px; background: #bbb; margin: 8px auto 0; }
.act { display: flex; align-items: center; color: #333; font-size: 6.800px; height: 12px; gap: 4px; padding-right: .6px; }
.act svg { width: 8px; height: 8px; }
.s2 { height: 43.800px; } .s2 .act { margin-top: 15px; }
.s3 { height: 45px; } .s3 .act { margin-top: 14.500px; }
.s4 { height: 72.500px; } .s4 .act { margin-top: 15px; }
.sf { height: 192px; }
.sf h5 { margin: 11.500px 0 14.500px; line-height: 12px; font-size: 6.700px; color: #222; transform: scaleX(.885); transform-origin: right; }
.field { position: relative; height: 25.500px; border: 1px solid #cfcedb; border-radius: 4px; background: #f2f1ff; margin-bottom: 14.800px; }
.field label { position: absolute; top: -7px; right: 5px; line-height: 10px; padding: 0 3px; background: linear-gradient(#fff 62%, #f2f1ff 62%); color: #777; }
.field svg { position: absolute; left: 6px; top: 6px; width: 12px; height: 13px; color: #4b3ff5; }
.btn { height: 21px; line-height: 21px; border-radius: 4px; background: #4b3ff5; color: #fff; text-align: center; font-size: 7.400px; }
.sf .btn { margin-top: -6.800px; }
.p5 .field { margin-bottom: 8px; }
.days { position: relative; display: flex; font-size: 7px; color: #333; line-height: 10px; margin: 0 72.800px 15px 0; }
.days span { width: 25px; text-align: center; flex: none; }
.days .w { color: #fff; }
.strip { position: absolute; left: 92px; right: 0; top: 50px; height: 20.500px; background: #e8e6fe; }
.day { position: absolute; left: 82.500px; top: 49.500px; width: 21px; height: 21px; border-radius: 50%; background: #4b3ff5; }
.sbh { position: absolute; left: 436px; top: 736px; width: 570px; height: 6px; border-radius: 3px; background: #a8a8a8; }
.sbv { position: absolute; left: 1156.300px; top: 671px; width: 6px; height: 63px; border-radius: 3px; background: #a8a8a8; }

/* taskbar */
.task { height: 40px; flex: none; display: flex; color: #fff; background: linear-gradient(90deg, #20383f, #1f3440 60%, #1b2945 82%, #1a2744); font: 14px "Segoe UI", "Open Sans", sans-serif; }
.start { width: 48px; padding: 12px 16px; }
.start svg { width: 16px; height: 16px; }
.find { width: 344px; height: 40px; background: #f1f1f1; border: 1px solid #b8bcbe; color: #333; display: flex; align-items: center; padding-left: 12px; font-size: 14px; }
.find span { margin-left: 11px; white-space: nowrap; letter-spacing: -.03px; }
.fm { width: 16px; height: 16px; }
.mt { width: 74px; height: 29px; margin-left: auto; margin-top: 9px; }
.apps { display: flex; }
.app { width: 48.900px; display: flex; align-items: center; justify-content: center; position: relative; }
.app:first-child { width: 50.500px; padding-right: 4px; }
.app.last { margin-left: -3px; }
.app svg { width: 20px; height: 20px; }
.app .w24 { width: 24px; height: 24px; }
.app .w22 { width: 22px; height: 22px; }
.app::after { content: ""; position: absolute; left: 4px; right: 4px; bottom: 0; height: 2px; background: #76b9ed; }
.app.n::after { display: none; }
.cur2 { background: #4d6369; }
.cur2::after { left: 0; right: 0; }
.tray { margin-left: auto; display: flex; align-items: center; width: 340px; }
.sun { width: 20px; height: 20px; border-radius: 50%; background: linear-gradient(145deg, #f9bb3a, #f2670f); margin-right: 10px; }
.tmp { margin-right: 9px; letter-spacing: -.45px; }
.t-up { width: 12px; height: 8px; margin-left: 7px; }
.t-mon { width: 16px; height: 14px; margin-left: 10px; }
.t-spk { width: 17px; height: 14px; margin-left: 7px; }
.eng { font-size: 12px; margin-left: 10px; letter-spacing: -.3px; }
.clk { width: 54px; margin-left: 11px; font: 11.500px/18px "Segoe UI", "Open Sans", "DejaVu Sans", sans-serif; display: flex; flex-direction: column; align-items: center; white-space: nowrap; }
.clk span:first-child { letter-spacing: -.7px; }
.clk span:last-child { font: 9.500px/18px "DejaVu Sans", sans-serif; letter-spacing: -.3px; }
.note { position: relative; margin-left: auto; margin-right: 3px; width: 38px; height: 40px; padding-top: 12px; border-right: 1px solid #56657d; }
.note svg { width: 16px; height: 16px; }
.note b { position: absolute; left: 7px; top: 18px; width: 18px; height: 18px; border-radius: 50%; background: #2b3444; border: 1px solid #777f8c; font: 10px/15px "DejaVu Sans", sans-serif; text-align: center; }
```
